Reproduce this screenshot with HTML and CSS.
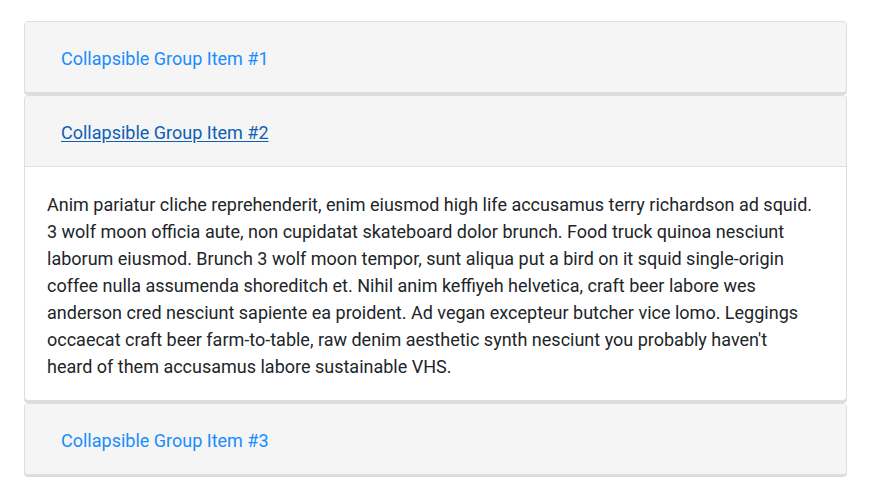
FILE: index.html
```html
<!DOCTYPE html>
<html lang="en">
<head>
<meta charset="utf-8">
<title>Accordion</title>
<link rel="stylesheet" href="styles.css">
</head>
<body>
<div class="accordion">
  <div class="card">
    <div class="card-header">
      <a class="btn-link" href="#one">Collapsible Group Item #1</a>
    </div>
  </div>
  <div class="card">
    <div class="card-header open">
      <a class="btn-link active" href="#two">Collapsible Group Item #2</a>
    </div>
    <div class="card-body">
      Anim pariatur cliche reprehenderit, enim eiusmod high life accusamus terry richardson ad squid. 3 wolf moon officia aute, non cupidatat skateboard dolor brunch. Food truck quinoa nesciunt laborum eiusmod. Brunch 3 wolf moon tempor, sunt aliqua put a bird on it squid single-origin coffee nulla assumenda shoreditch et. Nihil anim keffiyeh helvetica, craft beer labore wes anderson cred nesciunt sapiente ea proident. Ad vegan excepteur butcher vice lomo. Leggings occaecat craft beer farm-to-table, raw denim aesthetic synth nesciunt you probably haven't heard of them accusamus labore sustainable VHS.
    </div>
  </div>
  <div class="card">
    <div class="card-header">
      <a class="btn-link" href="#three">Collapsible Group Item #3</a>
    </div>
  </div>
</div>
</body>
</html>
```
FILE: styles.css
```css
html, body {
  margin: 0;
  padding: 0;
  background: #fff;
}
body {
  font-family: Roboto, "Liberation Sans", sans-serif;
  font-size: 18px;
  line-height: 27px;
  color: #212529;
  padding: 21px 24px;
}
.accordion {
  display: flex;
  flex-direction: column;
  gap: 2px;
}
.card {
  background: #fff;
  border: 1px solid #dedede;
  border-radius: 4px;
  box-shadow: 0 2px 0 #dcdcdc;
  overflow: hidden;
}
.card-header {
  background: #f5f5f5;
  padding: 23px 22px 20px 22px;
}
.card-header.open {
  border-bottom: 1px solid #dedede;
}
.btn-link {
  display: inline-block;
  padding: 0 14px;
  color: #1a8cff;
  text-decoration: none;
}
.btn-link.active {
  color: #0f5fb4;
  text-decoration: underline;
  text-underline-offset: 2px;
}
.card-body {
  padding: 24px 30px 20px 22px;
}
```
